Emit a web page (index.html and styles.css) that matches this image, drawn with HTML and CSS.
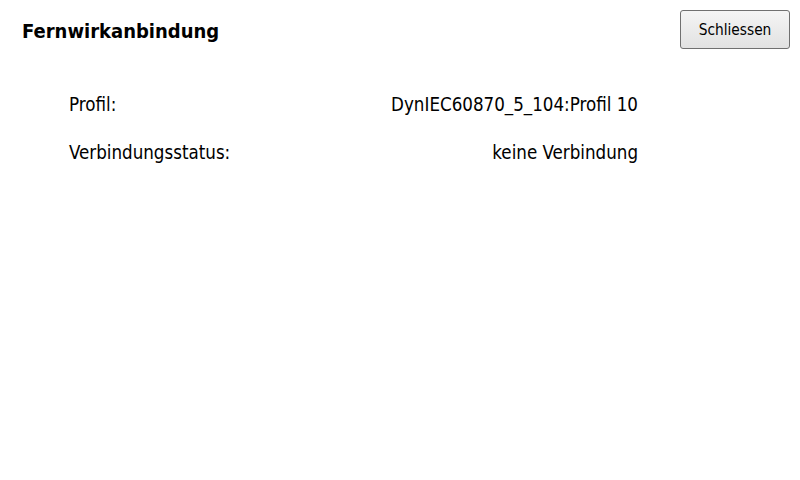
FILE: index.html
```html
<!DOCTYPE html>
<html lang="de">
<head>
<meta charset="utf-8">
<title>Fernwirkanbindung</title>
<link rel="stylesheet" href="styles.css">
</head>
<body>
<div class="page">
  <header class="header">
    <h1 class="title">Fernwirkanbindung</h1>
    <button class="close-btn" type="button">Schliessen</button>
  </header>
  <div class="info">
    <div class="row">
      <span class="label">Profil:</span>
      <span class="value">DynIEC60870_5_104:Profil 10</span>
    </div>
    <div class="row">
      <span class="label">Verbindungsstatus:</span>
      <span class="value">keine Verbindung</span>
    </div>
  </div>
</div>
</body>
</html>
```

FILE: styles.css
```css
html, body {
  margin: 0;
  padding: 0;
  background: #ffffff;
}

.page {
  width: 800px;
  height: 480px;
  font-family: "DejaVu Sans Condensed", "DejaVu Sans", sans-serif;
  color: #000;
  box-sizing: border-box;
}

.header {
  display: flex;
  justify-content: space-between;
  align-items: flex-start;
  padding: 10px 10px 0 22px;
}

.title {
  margin: 0;
  padding-top: 8px;
  font-size: 20px;
  font-weight: bold;
  line-height: 26px;
}

.close-btn {
  width: 110px;
  height: 39px;
  border: 1px solid #707070;
  border-radius: 3px;
  background: linear-gradient(#f4f4f4, #e2e2e2);
  font-family: inherit;
  font-size: 15.3px;
  color: #000;
  padding: 0;
}

.info {
  display: flex;
  flex-direction: column;
  gap: 26px;
  width: 569px;
  margin-left: 69px;
  margin-top: 45px;
}

.row {
  display: flex;
  justify-content: space-between;
  font-size: 18.6px;
  line-height: 22px;
}
```
